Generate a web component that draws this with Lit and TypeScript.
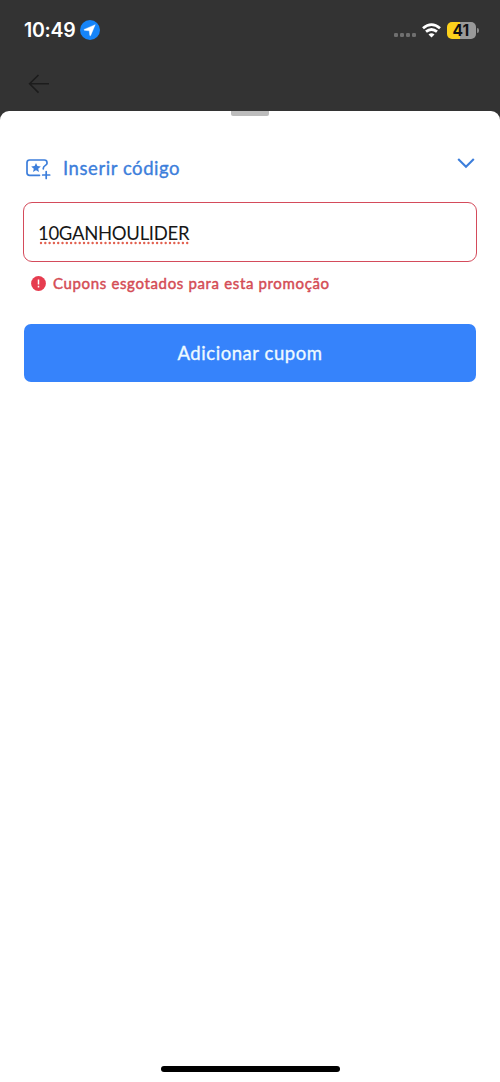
import { LitElement, html, css } from "lit";
import { customElement, property } from "lit/decorators.js";

@customElement("status-bar")
class StatusBar extends LitElement {
  static styles = css`
    :host { display: flex; justify-content: space-between; height: 60px; padding: 0 21px 0 24px; box-sizing: border-box; align-items: center; color: #fff; font-family: Inter, sans-serif; }
    .left { display: flex; align-items: center; gap: 5px; }
    .time { font-size: 19.5px; font-weight: 600; letter-spacing: -0.25px; line-height: 24px; width: 51px; white-space: nowrap; }
    .right { display: flex; align-items: center; }
    .dots { display: flex; gap: 2px; margin: 9px 6px 0 0; }
    .dots i { width: 4px; height: 4px; border-radius: 1.3px; background: #707070; }
    .wifi { margin-right: 6px; }
    .battery { width: 29px; height: 17px; border-radius: 5px; background: linear-gradient(90deg, #fdd21c 0 13px, #999 13px); color: #111; font-size: 15.5px; font-weight: 700; line-height: 17px; text-align: center; letter-spacing: .3px; text-indent: -1px; }
    .cap { width: 2px; height: 5px; border-radius: 0 2px 2px 0; background: #8a8a8a; margin-left: 1px; }
    svg { display: block; }
  `;
  render() {
    return html`
      <div class="left">
        <span class="time">10:49</span>
        <svg width="20" height="20" viewBox="0 0 20 20"><circle cx="10" cy="10" r="10" fill="#1584f8"/><path d="M15.2 4.7 L4.2 9.4 Q3.6 10 4.5 10.3 L9.3 10.8 L9.8 15.4 Q10.2 16.2 10.7 15.4 Z" fill="#fff" stroke="#fff" stroke-width=".4" stroke-linejoin="round"/></svg>
      </div>
      <div class="right">
        <div class="dots"><i></i><i></i><i></i><i></i></div>
        <svg class="wifi" width="19" height="15" viewBox="0 0 19 15" fill="none" stroke="#fff" stroke-width="2.8"><path d="M1 5.2 Q9.5 -2 18 5.2"/><path d="M4 8.7 Q9.5 4.2 15 8.7"/><path d="M9.5 14.6 L6.5 11.6 Q9.5 9.1 12.5 11.6Z" fill="#fff" stroke="none"/></svg>
        <div class="battery">41</div><div class="cap"></div>
      </div>`;
  }
}

@customElement("coupon-form")
class CouponForm extends LitElement {
  @property() code = "10GANHOULIDER";
  static styles = css`
    :host { display: block; padding: 40px 23px 0; font-family: Lato, sans-serif; }
    svg { display: block; flex: none; }
    .head { display: flex; align-items: center; height: 24px; color: #3c7edb; }
    .title { margin-left: 12px; font-size: 18.5px; line-height: 24px; flex: 1; letter-spacing: .56px; -webkit-text-stroke: .35px currentColor; }
    .chevron { margin: -10px 2px 0 0; }
    .field { margin-top: 22px; height: 60px; box-sizing: border-box; border: 1.4px solid #d44b5b; border-radius: 9px; padding: 17px 14px 0; color: #171717; font-size: 18.5px; line-height: 26px; }
    .code { display: inline-block; white-space: nowrap; position: relative; letter-spacing: -.3px; }
    .spell { position: absolute; left: 1px; top: 21px; }
    .error { display: flex; align-items: center; gap: 7px; margin: 10px 0 0 8px; height: 22px; color: #d44c55; font-size: 15px; white-space: nowrap; }
    .message { letter-spacing: .65px; -webkit-text-stroke: .45px currentColor; }
    .button { display: block; width: 452px; height: 58px; margin: 29.6px 1px 0; padding: 0; border: 0; border-radius: 7px; background: #3683fb; color: #eefaff; font: 400 18.5px/58px Lato, sans-serif; letter-spacing: .56px; -webkit-text-stroke: .35px currentColor; }
  `;
  render() {
    return html`
      <div class="head">
        <svg width="28" height="24" viewBox="0 0 28 24" fill="none" stroke="currentColor" stroke-width="1.7" stroke-linecap="round" stroke-linejoin="round"><path d="M16.5 19.3H6.6Q4 19.3 4 16.7V6.6Q4 4 6.6 4H21.4Q24 4 24 6.6V7.6C24 9.4 20.3 9.5 20.3 12.2V12.8"/><path d="M23.2 15.5v7M19.7 19h7"/><path d="M13 6.9l1.4 3.2 3.4.3-2.6 2.3.8 3.4-3-1.8-3 1.8.8-3.4-2.6-2.3 3.4-.3z" fill="currentColor" stroke="none"/></svg>
        <span class="title">Inserir código</span>
        <svg class="chevron" width="18" height="12" viewBox="0 0 18 12" fill="none" stroke="currentColor" stroke-width="2.1"><path d="M1.2 2 L9 9.7 L16.8 2"/></svg>
      </div>
      <div class="field"><span class="code">${this.code}<svg class="spell" width="151" height="4"><path d="M2 2H149" stroke="#e2604f" stroke-width="2.4" stroke-linecap="round" stroke-dasharray="0 4.3"/></svg></span></div>
      <div class="error">
        <svg width="15" height="15" viewBox="0 0 15 15"><circle cx="7.5" cy="7.5" r="7.4" fill="#e63c4f"/><path d="M7.5 3.4v5M7.5 9.8v1.6" stroke="#fff" stroke-width="1.5"/></svg>
        <span class="message">Cupons esgotados para esta promoção</span>
      </div>
      <button class="button">Adicionar cupom</button>`;
  }
}

@customElement("app-root")
class AppRoot extends LitElement {
  static styles = css`
    :host { display: flex; flex-direction: column; height: 1082px; background: #333; overflow: hidden; }
    .nav { height: 51px; flex: none; padding: 14px 0 0 28px; box-sizing: border-box; }
    .sheet { flex: 1; background: #fff; border-radius: 9px 9px 0 0; display: flex; flex-direction: column; }
    .grip { width: 38px; height: 5px; background: #bcbcbc; border-radius: 0 0 2px 2px; margin: 0 auto; flex: none; }
    .home { width: 179px; height: 6px; border-radius: 3px; background: #000; margin: auto auto 10px; }
    svg { display: block; }
  `;
  render() {
    return html`
      <status-bar></status-bar>
      <div class="nav"><svg width="22" height="20" viewBox="0 0 22 20" fill="none" stroke="#1c1c1c" stroke-width="1.6"><path d="M21 9.8H1.8M10.5 1L1.6 9.8L10.5 18.6"/></svg></div>
      <div class="sheet">
        <div class="grip"></div>
        <coupon-form></coupon-form>
        <div class="home"></div>
      </div>`;
  }
}
